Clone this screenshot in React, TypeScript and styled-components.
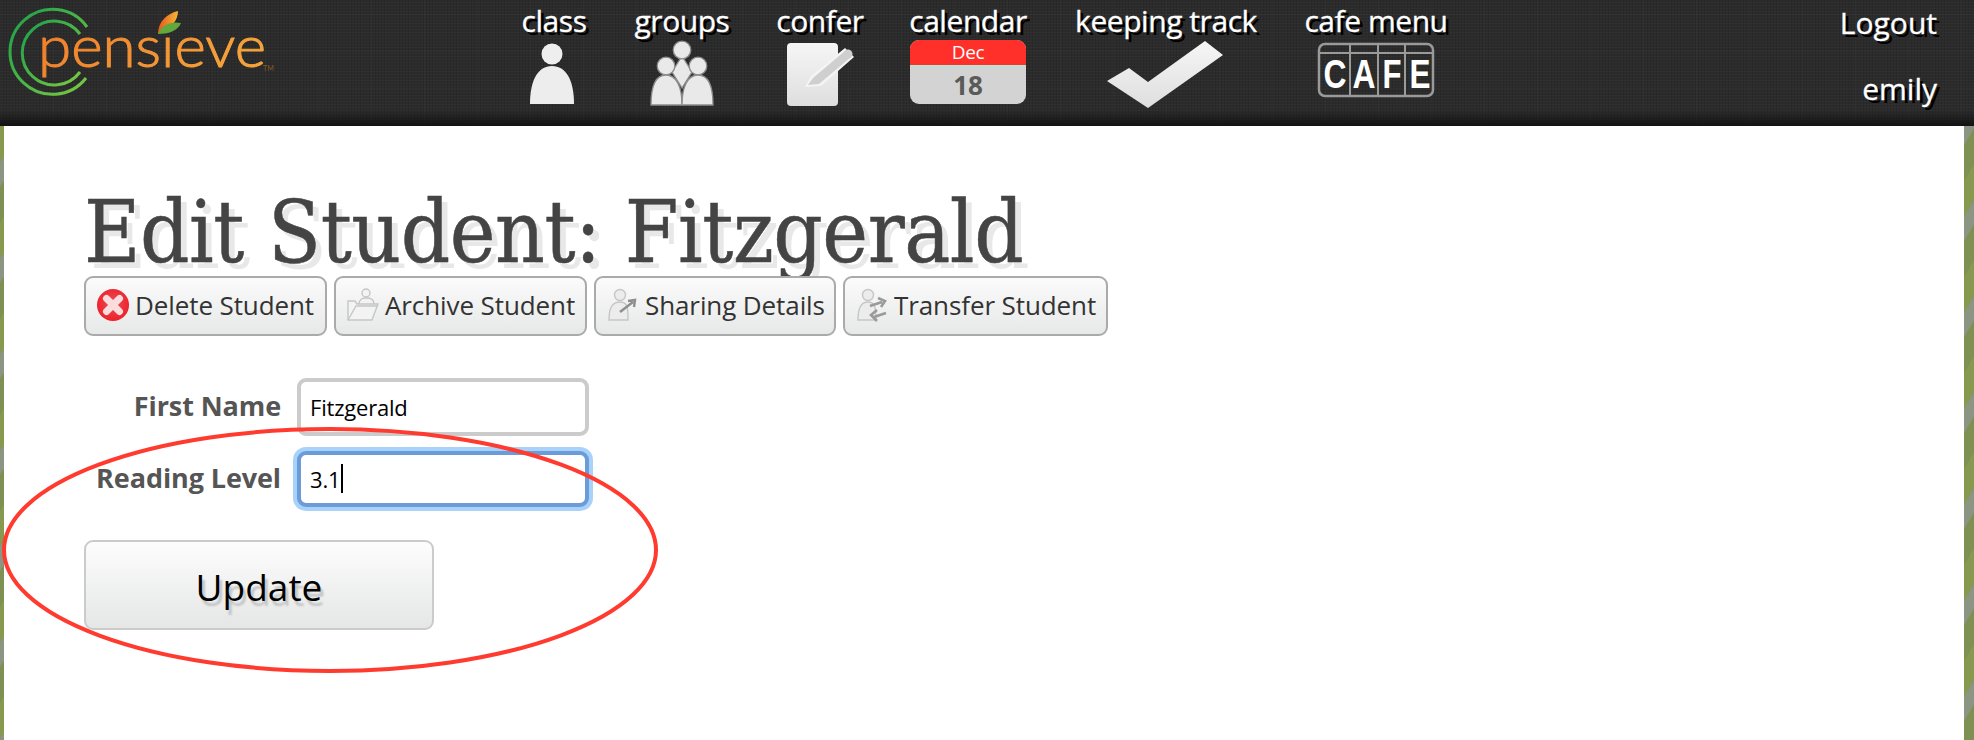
import React from "react";
import styled, { createGlobalStyle } from "styled-components";

const GlobalStyle = createGlobalStyle`
  html, body { margin: 0; padding: 0; }
  body {
    width: 1974px;
    height: 740px;
    overflow: hidden;
    font-family: "Open Sans", "Liberation Sans", sans-serif;
    background: repeating-linear-gradient(-60deg, #7f9152 0 18px, #8c9484 18px 30px, #86994e 30px 48px);
  }
`;

const Header = styled.header`
  display: flex;
  height: 126px;
  background-color: #2b2b2b;
  background-image:
    linear-gradient(180deg, transparent 110px, #121212 126px),
    repeating-linear-gradient(0deg, rgba(255, 255, 255, 0.02) 0 1px, transparent 1px 37px),
    repeating-linear-gradient(90deg, rgba(255, 255, 255, 0.02) 0 1px, transparent 1px 53px),
    repeating-linear-gradient(0deg, rgba(255, 255, 255, 0.025) 0 1px, transparent 1px 3px),
    repeating-linear-gradient(90deg, rgba(0, 0, 0, 0.1) 0 1px, transparent 1px 3px);
`;

const LogoSlot = styled.div`
  width: 494px;
  flex: none;
`;

const Nav = styled.nav`
  display: flex;
`;

const NavItem = styled.a<{ $w: number }>`
  display: flex;
  flex-direction: column;
  align-items: center;
  width: ${(p) => p.$w}px;
`;

const NavLabel = styled.span`
  padding-top: 1px;
  line-height: 39px;
  font-size: 30px;
  letter-spacing: -0.45px;
  color: #fff;
  white-space: nowrap;
  -webkit-text-stroke: 0.3px #fff;
  text-shadow: 3px 3px 0 #000;
`;

const UserCol = styled.div`
  margin-left: auto;
  padding: 3px 37px 17px 0;
  display: flex;
  flex-direction: column;
  justify-content: space-between;
  align-items: flex-end;
`;

const UserText = styled.span`
  font-size: 30px;
  line-height: 40px;
  color: #fff;
  -webkit-text-stroke: 0.3px #fff;
  text-shadow: 3px 3px 0 #000;
`;

const Calendar = styled.div`
  width: 116px;
  height: 64px;
  border-radius: 9px;
  overflow: hidden;
  background: #d3d3d3;
  display: flex;
  flex-direction: column;
  align-items: center;
`;

const CalMonth = styled.div`
  align-self: stretch;
  height: 25px;
  background: #ff3029;
  border-bottom: 2px solid #b5e3d6;
  color: #fff;
  font-size: 19px;
  letter-spacing: -0.3px;
  line-height: 25px;
  text-align: center;
`;

const CalDay = styled.div`
  font-size: 26px;
  font-weight: 700;
  line-height: 36px;
  color: #5a5a5a;
`;

const Main = styled.main`
  position: relative;
  height: 614px;
  margin: 0 10px 0 4px;
  padding-left: 80px;
  background: #fff;
`;

const Title = styled.h1`
  margin: 0;
  height: 150px;
  padding-top: 56px;
  box-sizing: border-box;
  font-family: "DejaVu Serif Condensed", "DejaVu Serif", serif;
  font-weight: 400;
  font-size: 86px;
  line-height: 100px;
  letter-spacing: -0.45px;
  color: #444;
  white-space: nowrap;
  -webkit-text-stroke: 0.5px #444;
  text-shadow: 6px 6px 0 #e8e8e8;
`;

const ActionBar = styled.div`
  position: relative;
  display: flex;
  gap: 7px;
`;

const ActionButton = styled.button<{ $w: number }>`
  display: flex;
  align-items: center;
  gap: 5px;
  width: ${(p) => p.$w}px;
  height: 60px;
  padding: 0 0 2px 10px;
  box-sizing: border-box;
  border: 2px solid #aaa;
  border-radius: 9px;
  background: linear-gradient(180deg, #fbfbfb, #e7e8e8);
  font-family: inherit;
  font-size: 26px;
  letter-spacing: -0.1px;
  color: #333;
  white-space: nowrap;
`;

const Form = styled.form`
  display: grid;
  grid-template-columns: 197px 292px;
  column-gap: 16px;
  row-gap: 15px;
  margin: 42px 0 0 0;
  align-items: center;
`;

const FieldLabel = styled.label`
  justify-self: end;
  padding-bottom: 3px;
  font-size: 27px;
  font-weight: 700;
  letter-spacing: -0.1px;
  color: #555;
  white-space: nowrap;
`;

const FieldBox = styled.div<{ $focused?: boolean }>`
  display: flex;
  align-items: center;
  height: ${(p) => (p.$focused ? 56 : 58)}px;
  padding: 0 0 1px 9px;
  box-sizing: border-box;
  border: 4px solid ${(p) => (p.$focused ? "#6b9bd8" : "#cbcbcb")};
  border-radius: 9px;
  background: #fff;
  font-size: 22px;
  letter-spacing: -0.2px;
  color: #000;
  box-shadow: ${(p) => (p.$focused ? "0 0 0 4px #a9d2fb" : "none")};
`;

const Caret = styled.span`
  width: 2px;
  height: 29px;
  margin-left: 1px;
  background: #000;
`;

const UpdateButton = styled.button`
  display: block;
  width: 350px;
  height: 90px;
  margin-top: 33px;
  padding-top: 3px;
  box-sizing: border-box;
  border: 2px solid #cbcbcb;
  border-radius: 9px;
  background: linear-gradient(180deg, #fdfdfd, #e5e6e6);
  font-family: inherit;
  font-size: 37px;
  letter-spacing: 0;
  color: #000;
  text-shadow: 3px 5px 2px #c4c4c4;
`;

const Annotation = styled.svg`
  position: absolute;
  left: -4px;
  top: 0;
  width: 670px;
  height: 614px;
  pointer-events: none;
`;

const Logo = () => (
  <svg width="300" height="110" viewBox="0 0 300 110">
    <defs>
      <linearGradient id="lo" x1="0" y1="0" x2="1" y2="0.3">
        <stop offset="0" stopColor="#f07b2a" />
        <stop offset="1" stopColor="#f5a33a" />
      </linearGradient>
      <linearGradient id="lg" x1="0" y1="0" x2="1" y2="1">
        <stop offset="0" stopColor="#1aa04a" />
        <stop offset="1" stopColor="#7ac943" />
      </linearGradient>
      <linearGradient id="lf" x1="0" y1="0" x2="1" y2="0">
        <stop offset="0" stopColor="#e8551f" />
        <stop offset="1" stopColor="#f7b733" />
      </linearGradient>
    </defs>
    <path d="M87 27 A42.5 42.5 0 1 0 86 78" fill="none" stroke="url(#lg)" strokeWidth="3" />
    <path d="M80 34 A32 32 0 1 0 80 72" fill="none" stroke="url(#lg)" strokeWidth="3" />
    <text
      x="38"
      y="67"
      fontFamily="Lato, sans-serif"
      fontWeight="300"
      fontSize="58"
      textLength="228"
      lengthAdjust="spacingAndGlyphs"
      fill="url(#lo)"
      stroke="url(#lo)"
      strokeWidth="1"
    >
      pensieve
    </text>
    <text x="263" y="71" fontFamily="Lato, sans-serif" fontSize="7" fill="#8a5a20">
      TM
    </text>
    <path d="M158 34 C158 22 166 14 178 11 C178 20 172 28 158 34 Z" fill="url(#lf)" />
    <path d="M158 34 C162 24 172 21 181 23 C178 31 168 34 158 34 Z" fill="#63a83c" />
  </svg>
);

const IconGrad = () => (
  <linearGradient id="ig" x1="0" y1="0" x2="0" y2="1">
    <stop offset="0" stopColor="#f6f6f6" />
    <stop offset="1" stopColor="#dedede" />
  </linearGradient>
);

const PersonIcon = () => (
  <svg width="48" height="70" viewBox="0 0 48 70">
    <circle cx="22" cy="14" r="10.5" fill="#eee" />
    <path d="M0 64 C0 40 8 26 22 26 C36 26 44 40 44 64 Z" fill="#ededed" />
  </svg>
);

const GroupsIcon = () => (
  <svg width="64" height="70" viewBox="0 0 64 70" fill="#e9e9e9" stroke="#8c8c8c" strokeWidth="1.3">
    <path d="M32 16 L42 32 L32 48 L22 32 Z" />
    <circle cx="32" cy="10" r="8.8" />
    <circle cx="16" cy="26" r="8.8" />
    <circle cx="48" cy="26" r="8.8" />
    <path d="M1 65 C1 46 6 35 16 35 C26 35 32 46 32 65 Z" />
    <path d="M32 65 C32 46 38 35 48 35 C58 35 63 46 63 65 Z" />
  </svg>
);

const ConferIcon = () => (
  <svg width="70" height="70" viewBox="0 0 70 70">
    <defs>
      <IconGrad />
    </defs>
    <rect x="2" y="3" width="51" height="63" rx="4" fill="url(#ig)" />
    <path d="M26 36 L60 8 L69 17 L36 46 L20 47 Z" fill="#f4f4f4" />
    <path d="M28 38 L60 11 L66 17 L34 44 L23 45 Z" fill="#cfcfcf" />
    <circle cx="63" cy="14" r="4.5" fill="#cfcfcf" />
  </svg>
);

const CheckIcon = () => (
  <svg width="118" height="70" viewBox="0 0 118 70">
    <defs>
      <IconGrad />
    </defs>
    <path d="M98 1 L116 15 L41 68 L0 41 L22 28 L41 42 Z" fill="url(#ig)" />
  </svg>
);

const CafeIcon = () => {
  const cells = [
    { l: "C", x: 18, w: 23 },
    { l: "A", x: 47, w: 23 },
    { l: "F", x: 75, w: 19 },
    { l: "E", x: 103, w: 21 },
  ];
  return (
    <svg width="118" height="70" viewBox="0 0 118 70">
      <rect x="2" y="4" width="114" height="52" rx="6" fill="none" stroke="#9a9a9a" strokeWidth="2.5" />
      <path d="M2 13 H116 M33 4 V56 M61 4 V56 M88 4 V56" stroke="#9a9a9a" strokeWidth="2" />
      {cells.map((c) => (
        <text
          key={c.l}
          x={c.x}
          y="48"
          textAnchor="middle"
          fontFamily="'Liberation Sans', sans-serif"
          fontWeight="700"
          fontSize="41"
          textLength={c.w}
          lengthAdjust="spacingAndGlyphs"
          fill="#fff"
        >
          {c.l}
        </text>
      ))}
    </svg>
  );
};

const DeleteIcon = () => (
  <svg width="34" height="34" viewBox="0 0 34 34">
    <defs>
      <radialGradient id="dr" cx="0.5" cy="0.45" r="0.6">
        <stop offset="0" stopColor="#e9505a" />
        <stop offset="1" stopColor="#ee1c25" />
      </radialGradient>
    </defs>
    <circle cx="17" cy="17" r="16" fill="url(#dr)" />
    <path d="M10.5 10.5 L23.5 23.5 M23.5 10.5 L10.5 23.5" stroke="#f9dcdc" strokeWidth="7" strokeLinecap="round" />
  </svg>
);

const ArchiveIcon = () => (
  <svg width="34" height="34" viewBox="0 0 34 34" fill="#f3f3f3" stroke="#c6c6c6" strokeWidth="1.4">
    <circle cx="20" cy="5" r="4" />
    <path d="M13 17 C13 11 16 10 20 10 C25 10 28 11 28 17" />
    <path d="M2 13 H9 L11 16 H32 L26 32 H2 Z" />
    <path d="M2 32 L10 18 H32" fill="none" />
  </svg>
);

const SharingIcon = () => (
  <svg width="34" height="34" viewBox="0 0 34 34" fill="#ececec" stroke="#c6c6c6" strokeWidth="1.4">
    <circle cx="14" cy="7" r="5.5" />
    <path d="M3 32 C3 20 6 14 14 14 C22 14 22 20 22 32 Z" />
    <path d="M14 24 L27 14 M22 13 L29 12 L28 19" fill="none" stroke="#8e8e8e" strokeWidth="2.4" />
  </svg>
);

const TransferIcon = () => (
  <svg width="34" height="34" viewBox="0 0 34 34" fill="#ececec" stroke="#c6c6c6" strokeWidth="1.4">
    <circle cx="13" cy="7" r="5.5" />
    <path d="M3 32 C3 20 6 14 13 14 C20 14 21 20 21 32 Z" />
    <path d="M15 18 L27 14 M23 10 L30 13 L26 19 M31 25 L19 29 M22 22 L16 27 L22 33" fill="none" stroke="#9a9a9a" strokeWidth="2.6" />
  </svg>
);

const navItems = [
  { label: "class", w: 120, icon: <PersonIcon /> },
  { label: "groups", w: 136, icon: <GroupsIcon /> },
  { label: "confer", w: 140, icon: <ConferIcon /> },
  {
    label: "calendar",
    w: 156,
    icon: (
      <Calendar>
        <CalMonth>Dec</CalMonth>
        <CalDay>18</CalDay>
      </Calendar>
    ),
  },
  { label: "keeping track", w: 240, icon: <CheckIcon /> },
  { label: "cafe menu", w: 180, icon: <CafeIcon /> },
];

const actions = [
  { label: "Delete Student", w: 243, icon: <DeleteIcon /> },
  { label: "Archive Student", w: 253, icon: <ArchiveIcon /> },
  { label: "Sharing Details", w: 242, icon: <SharingIcon /> },
  { label: "Transfer Student", w: 265, icon: <TransferIcon /> },
];

export default function App() {
  return (
    <>
      <GlobalStyle />
      <Header>
        <LogoSlot>
          <Logo />
        </LogoSlot>
        <Nav>
          {navItems.map((n) => (
            <NavItem key={n.label} $w={n.w}>
              <NavLabel>{n.label}</NavLabel>
              {n.icon}
            </NavItem>
          ))}
        </Nav>
        <UserCol>
          <UserText>Logout</UserText>
          <UserText>emily</UserText>
        </UserCol>
      </Header>
      <Main>
        <Title>Edit Student: Fitzgerald</Title>
        <ActionBar>
          {actions.map((a) => (
            <ActionButton key={a.label} type="button" $w={a.w}>
              {a.icon}
              {a.label}
            </ActionButton>
          ))}
        </ActionBar>
        <Form>
          <FieldLabel>First Name</FieldLabel>
          <FieldBox>Fitzgerald</FieldBox>
          <FieldLabel>Reading Level</FieldLabel>
          <FieldBox $focused>
            3.1
            <Caret />
          </FieldBox>
        </Form>
        <UpdateButton type="button">Update</UpdateButton>
        <Annotation viewBox="0 0 670 614">
          <ellipse cx="330" cy="424" rx="326" ry="121" fill="none" stroke="#ff3b30" strokeWidth="4" />
        </Annotation>
      </Main>
    </>
  );
}
